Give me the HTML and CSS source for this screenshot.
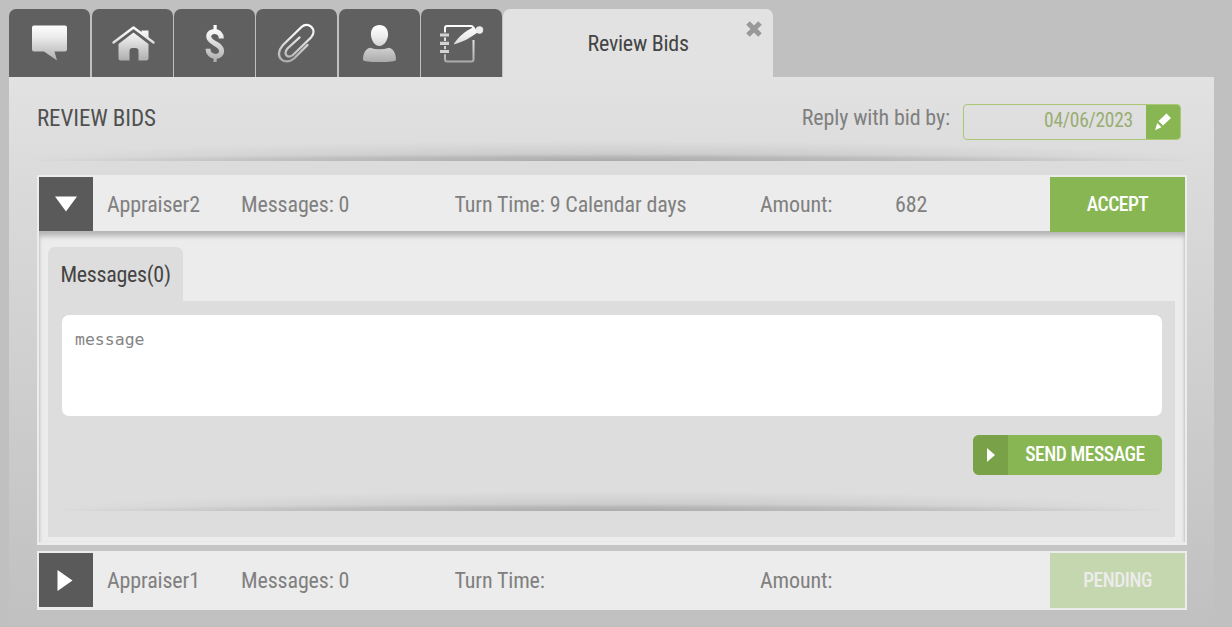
FILE: index.html
```html
<!DOCTYPE html>
<html lang="en">
<head>
  <meta charset="UTF-8" />
  <meta name="viewport" content="width=device-width, initial-scale=1.0" />
  <title>Review Bids</title>
  <link rel="stylesheet" href="styles.css">
</head>
<body>
  <!-- shared gradient for the tab icons -->
  <svg class="defs" width="0" height="0">
    <linearGradient id="silver" gradientUnits="userSpaceOnUse" x1="0" y1="16" x2="0" y2="54">
      <stop offset="0" stop-color="#fff" />
      <stop offset="0.3" stop-color="#ededed" />
      <stop offset="1" stop-color="#a8a8a8" />
    </linearGradient>
  </svg>

  <nav class="tabs">
    <a class="tab" title="Messages">
      <svg viewBox="0 0 81 67"><path fill="url(#silver)" d="M25 16.500h31q2 0 2 2v22q0 2-2 2H45.500l2.500 9-13-9H25q-2 0-2-2v-22q0-2 2-2z" /></svg>
    </a>
    <a class="tab" title="Property">
      <svg viewBox="0 0 81 67">
        <path fill="none" stroke="url(#silver)" stroke-width="2.400" stroke-linecap="round" stroke-linejoin="round" d="M21.500 33.500L41.500 18.500l20 15" />
        <path fill="url(#silver)" d="M49.500 21.500h7v8l-7-5.300zM41.500 23.500L56.500 35v14q0 2.500-2.500 2.500h-7.500V42q0-3-3-3h-3q-3 0-3 3v9.500H29q-2.500 0-2.500-2.500V35z" />
      </svg>
    </a>
    <a class="tab" title="Payments">
      <svg viewBox="0 0 81 67">
        <path fill="none" stroke="url(#silver)" stroke-width="5" d="M47.300 29.500C47.300 20.500 34.700 20.500 34.700 27.500S47.600 34.500 47.600 42S34 49.500 34 39.800" />
        <path fill="url(#silver)" d="M39.500 16h3.200v7h-3.200zM39.500 46h3.200v7h-3.200z" />
      </svg>
    </a>
    <a class="tab" title="Attachments">
      <svg viewBox="0 0 81 67"><path fill="none" stroke="url(#silver)" stroke-width="2.300" stroke-linecap="round" d="M43.500 28.500L31.500 39.500C26 46 33 50.500 38 45L55 28.500C62 21 52.500 11.500 45.500 18L27 36C16.500 48 29 57.500 38 49.500L51.500 36" /></svg>
    </a>
    <a class="tab" title="Contacts">
      <svg viewBox="0 0 81 67"><path fill="url(#silver)" d="M40.500 16c5.500 0 8.600 4 8.600 9.300S45.500 37 40.500 37s-8.600-6.300-8.600-11.700S35 16 40.500 16zM31 38.800q9.500 3 19 0C56 40.500 57 47 57 51q-1 2-16.500 2T24 51c0-4 1-10.500 7-12.200z" /></svg>
    </a>
    <a class="tab" title="Notes">
      <svg viewBox="0 0 81 67">
        <path fill="none" stroke="url(#silver)" stroke-width="2" d="M52 20.500V19q0-2-2-2H26q-2 0-2 2V50q0 2.500 2 2.500h24.500q2 0 2-2.500V31" />
        <path stroke="#606060" stroke-width="4" d="M24 23.500v5M24 32v5M24 40.200v5" />
        <path stroke="#d2d2d2" stroke-width="3.200" d="M19 26H28M19 34.300H28M19 42.500H28" />
        <path fill="url(#silver)" d="M32.500 35.500C37 28 44 22 53.500 18l3 5.500C49 29 42 33 32.500 35.500z" />
        <circle cx="58.500" cy="21" r="3.700" fill="#ececec" />
      </svg>
    </a>
    <a class="tab active">
      <span class="tab-label">Review Bids</span>
      <svg class="tab-close" viewBox="0 0 18 18"><path d="M3 3l12 12M15 3L3 15" /></svg>
    </a>
  </nav>

  <main class="panel">
    <div class="panel-header">
      <h1>REVIEW BIDS</h1>
      <label class="due-label" for="due">Reply with bid by:</label>
      <div class="due-field">
        <span class="due-date" id="due">04/06/2023</span>
        <button class="due-edit" title="Edit">
          <svg viewBox="0 0 18 18"><path d="M12.500 0.500l4.500 4.500-8 7.500-4.500-4.500zM3.300 10l4.200 4.200-6.500 3z" /></svg>
        </button>
      </div>
    </div>
    <div class="divider"></div>

    <section class="bid">
      <div class="bid-row">
        <button class="toggle"><svg viewBox="0 0 54 54"><path d="M16 19.500h22L27 34.500z" /></svg></button>
        <span class="name">Appraiser2</span>
        <span>Messages: 0</span>
        <span>Turn Time: 9 Calendar days</span>
        <span>Amount:</span>
        <span>682</span>
        <button class="action">ACCEPT</button>
      </div>
      <div class="bid-body">
        <div class="sub-tab">Messages(0)</div>
        <div class="messages">
          <textarea placeholder="message"></textarea>
          <button class="send">
            <span class="send-icon"><svg viewBox="0 0 8 14"><path d="M0 0l8 7-8 7z" /></svg></span>
            <span class="send-label">SEND MESSAGE</span>
          </button>
          <div class="divider"></div>
        </div>
      </div>
    </section>

    <section class="bid">
      <div class="bid-row">
        <button class="toggle"><svg viewBox="0 0 54 54"><path d="M18.500 17l15 10.500-15 10.500z" /></svg></button>
        <span class="name">Appraiser1</span>
        <span>Messages: 0</span>
        <span>Turn Time:</span>
        <span>Amount:</span>
        <span></span>
        <button class="action pending">PENDING</button>
      </div>
    </section>
  </main>
</body>
</html>
```

FILE: styles.css
```css
* {
  box-sizing: border-box;
}
body {
  margin: 0;
  padding: 9.4px 18px 0 9px;
  height: 627px;
  overflow: hidden;
  background: #c0c0c0;
  color: #808080;
  font-family: 'Roboto Condensed', 'Roboto', sans-serif;
  font-stretch: 75%;
  font-size: 22px;
  letter-spacing: -0.13px;
}
button {
  border: none;
  padding: 0;
  font: inherit;
  letter-spacing: inherit;
  color: white;
  background: #88b653;
  cursor: pointer;
}
svg {
  display: block;
}
.defs {
  position: absolute;
}
.tabs {
  display: flex;
  gap: 1.3px;
  height: 68px;
  padding-left: 0.4px;
}
.tab {
  width: 81px;
  height: 67.6px;
  background: #606060;
  border-radius: 7px 7px 0 0;
}
.tab svg {
  width: 81px;
  height: 67px;
}
.tab.active {
  position: relative;
  width: 270px;
  height: 69px;
  background: #e2e2e2;
  color: #444;
  text-align: center;
  line-height: 69px;
  letter-spacing: -0.25px;
}
.tab .tab-close {
  position: absolute;
  top: 11px;
  right: 10px;
  width: 18px;
  height: 18px;
  fill: none;
  stroke: #999;
  stroke-width: 5;
}
.panel {
  height: 550px;
  padding: 27px 27px 0 28px;
  background: linear-gradient(#e2e2e2, #dadada 20%, #c0c0c0);
}
.panel-header {
  display: flex;
  height: 56.6px;
}
h1 {
  margin: 0 auto 0 0;
  font-size: 23px;
  font-weight: 400;
  line-height: 29px;
  letter-spacing: -0.1px;
  color: #505050;
}
.due-label {
  margin-right: 13px;
  line-height: 28px;
}
.due-field {
  display: flex;
  width: 218px;
  height: 36px;
  margin-right: 6px;
  border: 1px solid #aac773;
  border-radius: 4px;
  overflow: hidden;
}
.due-date {
  flex: 1;
  padding-right: 13px;
  text-align: right;
  font-size: 19.5px;
  line-height: 32px;
  letter-spacing: -0.25px;
  color: #99ad72;
}
.due-edit {
  width: 34px;
}
.due-edit svg {
  width: 18px;
  height: 18px;
  margin: auto;
  fill: white;
}
.divider {
  height: 20px;
  background:
    radial-gradient(ellipse 52% 35% at bottom, rgba(0, 0, 0, 0.12), rgba(0, 0, 0, 0.08) 60%, transparent),
    radial-gradient(ellipse 52% 100% at bottom, rgba(0, 0, 0, 0.12), rgba(0, 0, 0, 0.05) 55%, transparent);
}
.panel > .divider {
  margin: -20px 0 14.4px;
}
.bid {
  margin-bottom: 6px;
  padding: 2px 2px 3px;
  background: #ececec;
}
.bid-row {
  display: grid;
  grid-template-columns: 68px 134px 213.5px 305.5px 135px 155px 135px;
  height: 54px;
  line-height: 55px;
  white-space: nowrap;
}
.toggle {
  width: 54px;
  height: 54px;
  background: #5a5a5a;
}
.toggle svg {
  fill: white;
}
.action {
  font-size: 19.5px;
  font-weight: 500;
  letter-spacing: -0.5px;
}
.action.pending {
  background: #c5d7ae;
  color: #ececec;
}
.bid-body {
  padding: 16px 10px 5px 9px;
  box-shadow: inset 0 6px 5px -1px #b5b5b5, inset 2px 0 3px -2px #c0c0c0, inset -2px 0 3px -2px #c0c0c0;
}
.sub-tab {
  width: 135px;
  height: 54px;
  border-radius: 7px 7px 0 0;
  background: #ddd;
  color: #444;
  line-height: 55px;
  letter-spacing: -0.3px;
  text-align: center;
}
.messages {
  display: flex;
  flex-direction: column;
  height: 236px;
  padding: 14px 13px 0 14px;
  background: #ddd;
}
textarea {
  display: block;
  height: 101px;
  padding: 15px 13px;
  border: none;
  border-radius: 7px;
  resize: none;
  background: white;
  font-family: 'DejaVu Sans Mono', monospace;
  font-size: 16.5px;
}
textarea::placeholder {
  color: #858585;
}
.send {
  display: flex;
  align-self: flex-end;
  width: 189px;
  height: 40px;
  margin-top: 19px;
  border-radius: 6px;
  overflow: hidden;
  font-size: 19.5px;
  font-weight: 500;
  line-height: 39px;
  letter-spacing: -0.45px;
}
.send-icon {
  width: 35px;
  height: 40px;
  padding: 13px 0 0 14px;
  background: #79a248;
}
.send-icon svg {
  width: 8px;
  height: 14px;
  fill: white;
}
.send-label {
  flex: 1;
}
.messages .divider {
  margin-top: 16px;
}
```
